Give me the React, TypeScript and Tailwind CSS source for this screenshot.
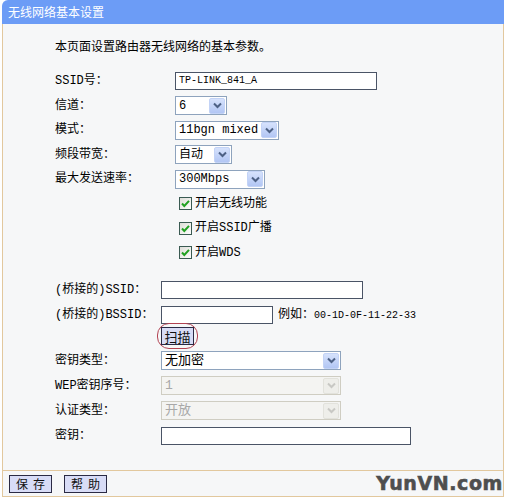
import type { ReactNode } from "react";

function Arrow({ disabled = false }: { disabled?: boolean }) {
    return (
        <div
            className={`flex h-[16px] w-[16px] items-center justify-center rounded-[2px] border ${
                disabled
                    ? "border-[#e2e2dc] bg-[#eeeeea]"
                    : "border-[#c3d3f6] bg-gradient-to-b from-[#d6e2fc] to-[#b2c6f4]"
            }`}
        >
            <svg width="9" height="7" viewBox="0 0 9 7">
                <polyline
                    points="1,1.5 4.5,5 8,1.5"
                    fill="none"
                    stroke={disabled ? "#c8c8c4" : "#4d6185"}
                    strokeWidth="2"
                />
            </svg>
        </div>
    );
}

function Select({
    value,
    width,
    big = false,
    disabled = false,
}: {
    value: string;
    width: string;
    big?: boolean;
    disabled?: boolean;
}) {
    return (
        <div
            className={`${width} flex h-[19px] items-center justify-between border pl-[3px] pr-px ${
                disabled
                    ? "border-[#cfcdc2] bg-[#f4f4f2] text-[#a8a8a8]"
                    : "border-[#8ea3bd] bg-white text-black"
            } ${big ? "text-[13px]" : "text-[12px]"}`}
        >
            <span className="leading-none">{value}</span>
            <Arrow disabled={disabled} />
        </div>
    );
}

function Input({ width, value = "" }: { width: string; value?: string }) {
    return (
        <div
            className={`${width} flex h-[18px] items-center border border-[#4a5466] bg-white pl-[3px] text-[10px] leading-none`}
        >
            {value}
        </div>
    );
}

function Row({
    label,
    labelW,
    h,
    children,
}: {
    label: string;
    labelW: string;
    h: string;
    children: ReactNode;
}) {
    return (
        <div className={`flex ${h} items-center`}>
            <div className={`${labelW} shrink-0`}>{label}</div>
            {children}
        </div>
    );
}

function Check({ label }: { label: string }) {
    return (
        <div className="flex h-[24.5px] items-center pl-[124px]">
            <svg width="13" height="13" viewBox="0 0 13 13" className="mr-[3px]">
                <defs>
                    <linearGradient id="cb" x1="0" y1="0" x2="1" y2="1">
                        <stop offset="0" stopColor="#dcdcd5" />
                        <stop offset="1" stopColor="#ffffff" />
                    </linearGradient>
                </defs>
                <rect x="0.5" y="0.5" width="12" height="12" fill="url(#cb)" stroke="#3a5a52" />
                <polyline
                    points="3,6.5 5.3,9 10,3.8"
                    fill="none"
                    stroke="#21a121"
                    strokeWidth="2"
                />
            </svg>
            <span>{label}</span>
        </div>
    );
}

function Btn({ children, wide = false }: { children: ReactNode; wide?: boolean }) {
    return (
        <div
            className={`flex h-[18px] items-center justify-center whitespace-nowrap border border-[#2a2a44] bg-[#d8dcf6] leading-none text-[#111] ${
                wide ? "w-[43px] pl-[5px] text-[12px] tracking-[5px]" : "w-[33px] text-[13px]"
            }`}
        >
            {children}
        </div>
    );
}

export default function App() {
    return (
        <div className="h-[499px] w-[507px] bg-white font-['Liberation_Mono','Noto_Sans_CJK_SC',monospace] text-[12px] text-black">
            <div className="ml-[2px] w-[502px]">
                <div className="flex h-[24px] items-center rounded-tl-[6px] bg-[#6c9cf6] pl-[6px] font-['Noto_Sans_CJK_SC',sans-serif] text-[12px] text-white">
                    无线网络基本设置
                </div>

                <div className="border-x border-[#e2c89e] bg-[#f6f7f8] pb-[22px] pl-[52px] pt-[9px]">
                    <div className="flex h-[25px] items-center font-['Noto_Sans_CJK_SC',sans-serif]">
                        本页面设置路由器无线网络的基本参数。
                    </div>

                    <div className="mt-[11px]">
                        <Row label="SSID号：" labelW="w-[120px]" h="h-[24.5px]">
                            <Input width="w-[202px]" value="TP-LINK_841_A" />
                        </Row>
                        <Row label="信道：" labelW="w-[120px]" h="h-[24.5px]">
                            <Select value="6" width="w-[52px]" />
                        </Row>
                        <Row label="模式：" labelW="w-[120px]" h="h-[24.5px]">
                            <Select value="11bgn mixed" width="w-[104px]" />
                        </Row>
                        <Row label="频段带宽：" labelW="w-[120px]" h="h-[24.5px]">
                            <Select value="自动" width="w-[57px]" />
                        </Row>
                        <Row label="最大发送速率：" labelW="w-[120px]" h="h-[24.5px]">
                            <Select value="300Mbps" width="w-[90px]" />
                        </Row>
                        <Check label="开启无线功能" />
                        <Check label="开启SSID广播" />
                        <Check label="开启WDS" />
                    </div>

                    <div className="mt-3">
                        <Row label="(桥接的)SSID：" labelW="w-[106px]" h="h-[25px]">
                            <Input width="w-[202px]" />
                        </Row>
                        <Row label="(桥接的)BSSID：" labelW="w-[106px]" h="h-[25px]">
                            <Input width="w-[112px]" />
                            <span className="ml-[5px]">
                                例如：<span className="text-[10px]">00-1D-0F-11-22-33</span>
                            </span>
                        </Row>
                        <div className="h-[21px] pl-[106px]">
                            <div className="relative w-[33px] font-['Noto_Sans_CJK_SC',sans-serif]">
                                <div className="absolute -inset-x-[4px] -inset-y-[4px] rounded-[12px] border border-[#b24252]" />
                                <Btn>扫描</Btn>
                            </div>
                        </div>
                        <Row label="密钥类型：" labelW="w-[106px]" h="h-[25px]">
                            <Select value="无加密" width="w-[180px]" big />
                        </Row>
                        <Row label="WEP密钥序号：" labelW="w-[106px]" h="h-[25px]">
                            <Select value="1" width="w-[180px]" big disabled />
                        </Row>
                        <Row label="认证类型：" labelW="w-[106px]" h="h-[25px]">
                            <Select value="开放" width="w-[180px]" big disabled />
                        </Row>
                        <Row label="密钥：" labelW="w-[106px]" h="h-[25px]">
                            <Input width="w-[250px]" />
                        </Row>
                    </div>
                </div>

                <div className="flex h-[27px] items-center justify-between border border-[#e2c89e] bg-[#f6f7f8] pl-[6px] font-['Noto_Sans_CJK_SC',sans-serif]">
                    <div className="flex gap-[12px]">
                        <Btn wide>保存</Btn>
                        <Btn wide>帮助</Btn>
                    </div>
                    <div className="font-['DejaVu_Sans',sans-serif] text-[19px] font-black leading-none tracking-[0.6px] text-[#4e4e4e] [-webkit-text-stroke:0.6px_#4e4e4e]">
                        YunVN.com
                    </div>
                </div>
            </div>
        </div>
    );
}
